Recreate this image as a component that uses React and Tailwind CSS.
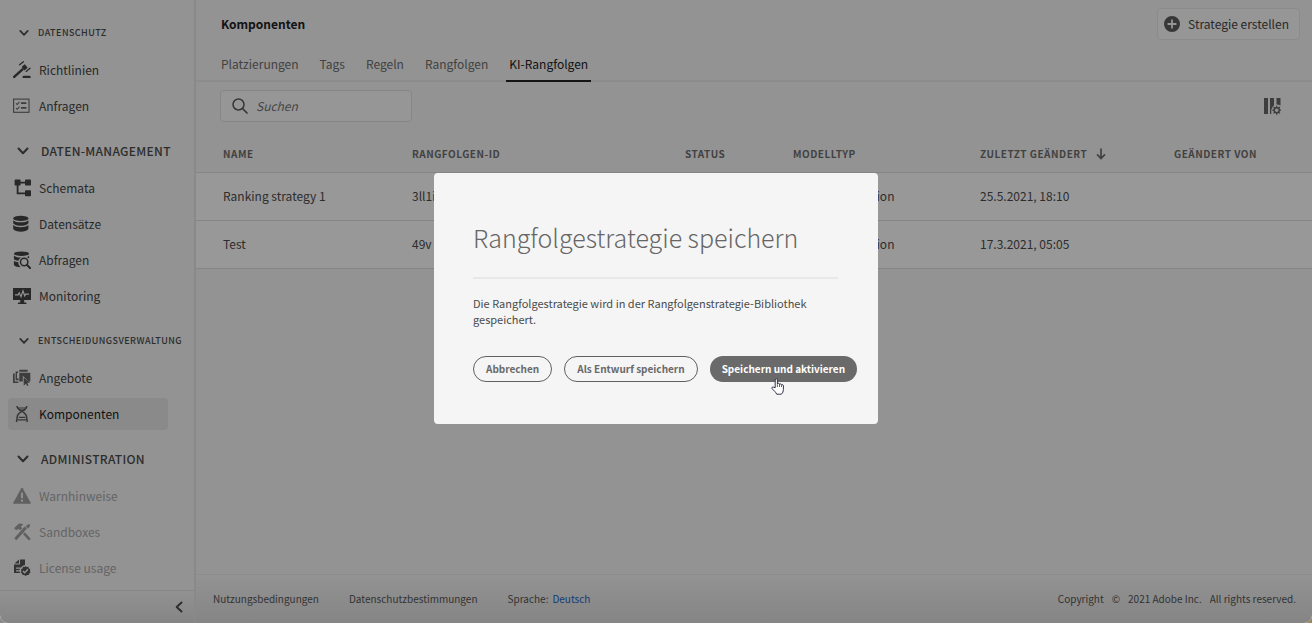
import React from "react";

function Icon({ children, className = "size-[18px]", viewBox = "0 0 18 18" }) {
  return (
    <svg viewBox={viewBox} className={`${className} shrink-0`} fill="currentColor" aria-hidden="true">
      {children}
    </svg>
  );
}

const Gavel = () => (
  <Icon>
    <path d="M1.200 15.900 9.500 8.300" stroke="currentColor" strokeWidth="2.400" strokeLinecap="round" />
    <path d="M8.600 5.800 11.800 3.200l2.900 3.600-3.200 2.600z" />
    <path d="M6.600 3.700 10.400.8M13.200 10.400l3.800-3.200" stroke="currentColor" strokeWidth="1.300" strokeLinecap="round" />
    <path d="M9.600 17v-1q0-1.200 1.200-1.200h5.600q1.200 0 1.200 1.200v1z" />
  </Icon>
);
const Checklist = () => (
  <Icon>
    <rect x=".6" y="2.1" width="15.4" height="13.2" fill="none" stroke="currentColor" strokeWidth="1.1" />
    <path d="m3 6.4 1.2 1.1 2.3-2.6M3 11.2l1.2 1.1 2.3-2.6" fill="none" stroke="currentColor" strokeWidth="1.1" />
    <path d="M8 5.3h5.4v1.8H8zM8 10h5.4v1.8H8z" />
  </Icon>
);
const Schema = () => (
  <Icon>
    <rect x="1.600" y=".6" width="6" height="6" rx=".8" />
    <rect x="12" y=".6" width="6" height="6" rx=".8" />
    <rect x="12" y="11.200" width="6" height="6" rx=".8" />
    <path d="M7 3.600h6M4.600 5v9.400H13" fill="none" stroke="currentColor" strokeWidth="1.800" />
  </Icon>
);
const Database = () => (
  <Icon>
    <ellipse cx="7.800" cy="3.400" rx="7.600" ry="2.600" />
    <path d="M.2 5.200C1.800 7 4.800 7.300 7.800 7.300S13.800 7 15.400 5.200v3C13.800 10.200 10.800 10.700 7.800 10.700S1.800 10.200.2 8.200z" />
    <path d="M.2 10C1.800 11.800 4.800 12.200 7.800 12.200s6-.4 7.600-2.200v4c-1.200 2-4.400 2.700-7.600 2.700S1.400 16 .2 14z" />
  </Icon>
);
const DatabaseSearch = () => (
  <Icon>
    <ellipse cx="8.500" cy="2.700" rx="7.600" ry="2.300" />
    <path d="M.9 4.600c1.700 1.700 4.600 2 7.600 2-1.600.7-2.600 1.700-3 3.200C3.400 9.600 1.700 9.100.9 8zM16.100 4.600V7.500q-1-1-2.300-1.300 1.500-.5 2.300-1.600zM.9 9.700c1 1 2.700 1.400 4.400 1.500 0 2.200 1 4 2.600 5C4.700 16.200 1.900 15.500.9 14z" />
    <circle cx="11.200" cy="11" r="3.700" fill="none" stroke="currentColor" strokeWidth="1.500" />
    <path d="m13.900 13.800 3.300 3.400" stroke="currentColor" strokeWidth="2" strokeLinecap="round" />
  </Icon>
);
const Monitor = () => (
  <Icon>
    <path d="M.3 1h17.400q.3 0 .3.300v11.400q0 .3-.3.300h-6.500v2.500h1.600q.8 0 .8 1.500H4.800q0-1.500.8-1.500h1.600V13H.3Q0 13 0 12.700V1.300Q0 1 .3 1z" />
    <path d="M2 7.800h3.200l1-2 1.800 3.900L10 3.900l1.700 5 1-1.800h3.300" fill="none" stroke="#f5f5f5" strokeWidth="1.200" />
  </Icon>
);
const Offers = () => (
  <Icon>
    <path d="M0 4.400h1.700v8h3.600V14H0z" />
    <path d="M2.600 2.400h2.600v1.500H4v5.700h1.700v1.600H2.600z" />
    <path d="M6.300.8h8.300v2H6.300zM6.300 3.700h11v8.800h-1.600L9.800 6.800v5.700H6.300z" />
    <path d="M10.700 8.500v8.200l2.200-2 1.300 2.300 1.300-.7-1.200-2.300 2.600-.4z" />
  </Icon>
);
const Dna = () => (
  <Icon>
    <path
      d="M4 1c0 5 9.600 5.400 9.600 11 0 2 .4 3.500.8 5M13.800 1c0 5-9.600 5.400-9.600 11 0 2-.4 3.500-.8 5"
      fill="none"
      stroke="currentColor"
      strokeWidth="1.500"
    />
    <path d="M4.600 3h9M5.800 5.200h6.500M5.700 12.400h6.600M4.600 14.800h9" stroke="currentColor" strokeWidth="1.200" />
  </Icon>
);
const Alert = () => (
  <Icon>
    <path d="M8.300 1.200q.7-1 1.400 0l8 14.500q.5 1-.6 1H.9q-1.100 0-.6-1z" />
    <path d="M9 5.800v5.400" stroke="#f5f5f5" strokeWidth="1.900" />
    <circle cx="9" cy="13.700" r="1.100" fill="#f5f5f5" />
  </Icon>
);
const Tools = () => (
  <Icon>
    <path d="m2.300 16.300 10.500-11.700" stroke="currentColor" strokeWidth="3" />
    <path d="m12.600 3.200 2.800-2q1.700-.2 1.800 1.400l-2 3.200z" />
    <path d="M1 5.200 5.700.8q2.500-.8 4.600.6L7.800 3.600l1.500 1.700-2.400 2-1.500-1.600-2 1.600z" />
    <path d="m11.600 11 4.500 4.800" stroke="currentColor" strokeWidth="2.600" strokeLinecap="round" />
  </Icon>
);
const License = () => (
  <Icon>
    <path d="M6 .5v4H1.500zM7 .5h5v5.600q-2.600.4-4 2.400H3v1.200h4l-.5 1.500H3v1.200h3.500l.5 1.600H1V5.500h6z" />
    <path d="m12.300 7 1.300 1 1.700-.2.500 1.600 1.500.8-.4 1.700.7 1.500-1.400 1-.5 1.700-1.700-.1-1.400 1-1.400-1-1.600.1-.5-1.700-1.400-1 .7-1.500-.4-1.700 1.500-.8.5-1.600 1.700.2z" />
    <path d="m9.900 12 1.800 1.800 3.200-3.500" fill="none" stroke="#f5f5f5" strokeWidth="1.300" />
  </Icon>
);

const Chevron = ({ className }) => (
  <svg viewBox="0 0 12 12" className={className} fill="none" stroke="currentColor" strokeWidth="2" strokeLinecap="round" strokeLinejoin="round" aria-hidden="true">
    <path d="m1.500 3.500 4.500 4.800 4.500-4.800" />
  </svg>
);

const sections = [
  { title: "DATENSCHUTZ", small: true, items: [["Richtlinien", Gavel], ["Anfragen", Checklist, "soft"]] },
  {
    title: "DATEN-MANAGEMENT",
    items: [["Schemata", Schema], ["Datensätze", Database], ["Abfragen", DatabaseSearch], ["Monitoring", Monitor]],
  },
  { title: "ENTSCHEIDUNGSVERWALTUNG", small: true, items: [["Angebote", Offers, "soft"], ["Komponenten", Dna, "active"]] },
  {
    title: "ADMINISTRATION",
    items: [["Warnhinweise", Alert, "off"], ["Sandboxes", Tools, "off"], ["License usage", License, "new"]],
  },
];

const itemStyles = {
  active: { row: "bg-[#e6e6e6] text-[#1c1c1c]", icon: "text-[#5c5c5c]" },
  off: { row: "text-[#a8a8a8]", icon: "text-[#a0a0a0]" },
  new: { row: "text-[#a8a8a8]", icon: "text-[#555555]" },
  soft: { row: "text-[#454545]", icon: "text-[#666666]" },
  normal: { row: "text-[#454545]", icon: "text-[#444444]" },
};

function Sidebar() {
  return (
    <aside className="flex w-[196px] shrink-0 flex-col border-r-2 border-[#e4e4e4]">
      <nav className="flex flex-1 flex-col gap-2 pt-[14px]">
        {sections.map((s) => (
          <section key={s.title}>
            <button
              className={
                s.small
                  ? "flex h-[38px] items-center gap-[9px] pl-[19px] text-[9px] font-medium tracking-wider whitespace-nowrap text-[#4b4b4b]"
                  : "flex h-[38px] items-center gap-3 pl-[17px] text-xs font-medium tracking-wide whitespace-nowrap text-[#4b4b4b]"
              }
            >
              <Chevron className={s.small ? "size-[10px] shrink-0" : "size-3 shrink-0"} />
              {s.title}
            </button>
            <ul>
              {s.items.map(([label, Glyph, state = "normal"]) => (
                <li key={label} className="flex h-9 items-center pr-[26px] pl-2">
                  <a href="#" className={`flex h-8 flex-1 items-center gap-2 rounded pl-[5px] text-xs ${itemStyles[state].row}`}>
                    <span className={itemStyles[state].icon}>
                      <Glyph />
                    </span>
                    {label}
                  </a>
                </li>
              ))}
            </ul>
          </section>
        ))}
      </nav>
      <div className="flex h-[33px] items-center justify-end border-t border-[#e0e0e0] bg-linear-to-b from-[#f3f3f3] to-[#dedede] pr-[9px]">
        <button aria-label="Navigation einklappen" className="text-[#4b4b4b]">
          <Chevron className="size-3 rotate-90" />
        </button>
      </div>
    </aside>
  );
}

const tabs = ["Platzierungen", "Tags", "Regeln", "Rangfolgen", "KI-Rangfolgen"];
const columns = [
  ["NAME", "w-[216px] pl-[27px]"],
  ["RANGFOLGEN-ID", "w-[273px]"],
  ["STATUS", "w-[108px]"],
  ["MODELLTYP", "w-[187px]"],
  ["ZULETZT GEÄNDERT", "w-[194px]"],
  ["GEÄNDERT VON", ""],
];
const rows = [
  ["Ranking strategy 1", "3ll1i", "", "Auto-optimization", "25.5.2021, 18:10", ""],
  ["Test", "49v", "", "Auto-optimization", "17.3.2021, 05:05", ""],
];

function Main() {
  return (
    <main className="flex min-w-0 flex-1 flex-col">
      <header className="border-b-2 border-[#e9e9e9]">
        <div className="flex h-[47px] items-center justify-between pr-3 pl-[25px]">
          <h1 className="text-xs font-bold text-[#222222]">Komponenten</h1>
          <button className="flex h-8 items-center gap-2 rounded border border-[#e8e8e8] bg-[#fbfbfb] pr-[10px] pl-[6px] text-xs text-[#454545]">
            <Icon className="size-4 text-[#5c5c5c]">
              <path fillRule="evenodd" d="M9 0a9 9 0 1 0 0 18A9 9 0 0 0 9 0zM8 4h2v4h4v2h-4v4H8v-4H4V8h4z" />
            </Icon>
            Strategie erstellen
          </button>
        </div>
        <nav className="-mb-[2px] flex h-[35px] gap-[15px] pl-[22px]">
          {tabs.map((t) => (
            <a
              key={t}
              href="#"
              className={
                t === "KI-Rangfolgen"
                  ? "flex items-center border-b-2 border-[#222222] px-[3px] text-xs text-[#222222]"
                  : "flex items-center border-b-2 border-transparent px-[3px] text-xs text-[#6e6e6e]"
              }
            >
              {t}
            </a>
          ))}
        </nav>
      </header>
      <div className="flex h-[55px] items-center justify-between pr-[31px] pb-[7px] pl-6">
        <label className="flex h-8 w-48 items-center gap-2 rounded border border-[#e0e0e0] bg-[#fbfbfb] px-[11px] text-[#5c5c5c]">
          <Icon className="size-4" viewBox="0 0 16 16">
            <circle cx="6.500" cy="6.500" r="5.500" fill="none" stroke="currentColor" strokeWidth="1.500" />
            <path d="m10.500 10.500 4.500 4.500" stroke="currentColor" strokeWidth="1.700" strokeLinecap="round" />
          </Icon>
          <input
            aria-label="Suchen"
            placeholder="Suchen"
            className="w-full min-w-0 bg-transparent text-xs italic outline-none placeholder:text-[#757575]"
          />
        </label>
        <button aria-label="Spalten anpassen" className="text-[#666666]">
          <Icon>
            <path d="M1 1h4v16H1zM7 1h4v7.500q-2 1.200-2.200 3.500l-.5.500V17H7zM13.500 1h4v7.500q-2-1.200-4-1z" />
            <circle cx="13.700" cy="13.200" r="2.500" fill="none" stroke="currentColor" strokeWidth="1.500" />
            <path
              d="M13.700 8.700v1.800M13.700 15.900v1.800M9.200 13.200H11M16.400 13.200h1.800M10.500 10l1.300 1.300M15.600 15.100l1.300 1.300M16.900 10l-1.300 1.300M11.800 15.100l-1.300 1.300"
              stroke="currentColor"
              strokeWidth="1.300"
            />
          </Icon>
        </button>
      </div>
      <table className="w-full table-fixed border-collapse text-left">
        <thead>
          <tr className="h-[35px] border-b border-[#dedede] text-[10px] font-bold tracking-wider text-[#6e6e6e]">
            {columns.map(([name, cls]) => (
              <th key={name} scope="col" className={cls}>
                {name === "ZULETZT GEÄNDERT" ? (
                  <button className="flex items-center gap-[9px]">
                    {name}
                    <svg viewBox="0 0 10 12" className="h-3 w-[10px]" fill="none" stroke="currentColor" strokeWidth="1.700" strokeLinecap="round" aria-hidden="true">
                      <path d="M5 1.200v9M1.500 6.800 5 10.500l3.500-3.700" />
                    </svg>
                  </button>
                ) : (
                  name
                )}
              </th>
            ))}
          </tr>
        </thead>
        <tbody>
          {rows.map((r) => (
            <tr key={r[0]} className="h-12 border-b border-[#dedede] bg-[#fefefe] text-xs text-[#4b4b4b]">
              {r.map((c, i) => (
                <td key={i} className={i === 0 ? "pl-[27px]" : ""}>
                  {c}
                </td>
              ))}
            </tr>
          ))}
        </tbody>
      </table>
      <footer className="mt-auto flex h-[49px] items-center border-t border-[#e9e9e9] bg-linear-to-b from-[#f5f5f5] to-[#dedede] pr-4 pl-[17px] text-[10px] text-[#555555]">
        <a href="#">Nutzungsbedingungen</a>
        <a href="#" className="ml-[30px]">
          Datenschutzbestimmungen
        </a>
        <span className="ml-[30px]">Sprache:</span>
        <a href="#" className="ml-1 text-[#1f64c8]">
          Deutsch
        </a>
        <span className="ml-auto flex gap-2">
          <span>Copyright</span>
          <span>©</span>
          <span>2021 Adobe Inc.</span>
          <span>All rights reserved.</span>
        </span>
      </footer>
    </main>
  );
}

function HandCursor() {
  return (
    <svg viewBox="0 0 14 17" className="pointer-events-none absolute top-[22px] left-[61px] h-[17px] w-[14px]" aria-hidden="true">
      <path
        d="M4.200 9.800V1.900q0-1.200 1.100-1.200t1.100 1.200v4.300q0-.9 1-.9t1.100.9v.5q.1-.8 1-.8t1 .9v.5q.2-.6.900-.6 1 0 1 1.100v3.700q0 3-2 4.700H5.700q-.6-1.400-2-2.900L1.200 10.800q-.7-.9.100-1.600.8-.6 1.600.1z"
        fill="#ffffff"
        stroke="#33334a"
        strokeWidth="1"
        strokeLinejoin="round"
      />
      <path d="M6.400 6.500V9M8.500 7v2M10.500 7.600V9" stroke="#33334a" strokeWidth=".8" />
    </svg>
  );
}

function SaveDialog() {
  const outline = "h-[26px] rounded-full border border-[#606060] px-3 text-[10px] font-bold whitespace-nowrap text-[#6a6a6a]";
  return (
    <div className="absolute inset-0 flex items-center justify-center bg-black/40 pb-[26px]">
      <div role="dialog" aria-modal="true" aria-labelledby="save-title" className="w-[444px] rounded bg-[#f5f5f5] pt-[46px] pb-[42px] pl-[39px]">
        <h2 id="save-title" className="mr-10 border-b-2 border-[#e8e8e8] pb-[22px] text-[25px] leading-9 font-light whitespace-nowrap text-[#666666]">
          Rangfolgestrategie speichern
        </h2>
        <p className="mt-4 mr-10 text-[11px] leading-4 text-[#4b4b4b]">
          Die Rangfolgestrategie wird in der Rangfolgenstrategie-Bibliothek gespeichert.
        </p>
        <div className="mt-[29px] flex gap-3">
          <button className={outline}>Abbrechen</button>
          <button className={outline}>Als Entwurf speichern</button>
          <div className="relative">
            <button className="h-[26px] rounded-full bg-[#6a6a6a] px-3 text-[10px] font-bold whitespace-nowrap text-white">
              Speichern und aktivieren
            </button>
            <HandCursor />
          </div>
        </div>
      </div>
    </div>
  );
}

export default function App() {
  return (
    <div className="h-screen min-h-[623px] bg-linear-to-r from-[#8a8a8a] from-50% to-[#a08458] font-['Noto_Sans_CJK_SC','Noto_Sans',sans-serif]">
      <div className="relative flex h-full overflow-hidden rounded-b-lg bg-[#f5f5f5] leading-5">
        <Sidebar />
        <Main />
        <SaveDialog />
      </div>
    </div>
  );
}
